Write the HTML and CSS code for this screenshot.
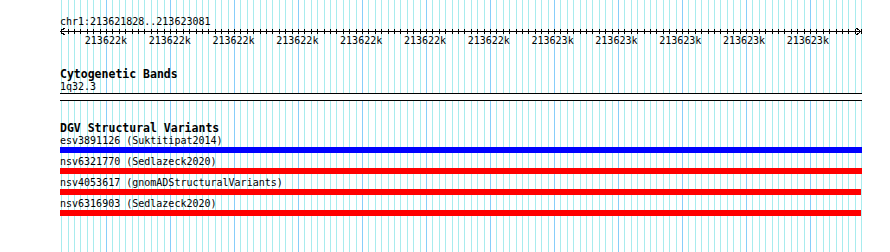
FILE: index.html
```html
<!DOCTYPE html>
<html>
<head>
<meta charset="utf-8">
<link rel="stylesheet" href="styles.css">
</head>
<body>
<div class="view">
  <svg class="grid" id="grid" width="802" height="252"></svg>
  <div class="ruler">
    <div class="loc">chr1:213621828..213623081</div>
    <svg class="scale" id="scale" width="802" height="6">
      <rect x="0" y="3" width="802" height="1" fill="#000"></rect>
      <polyline points="4.5,0 0.5,3.5 4.5,7" fill="none" stroke="#000" stroke-width="1"></polyline>
      <polyline points="796.5,0 800.5,3.5 796.5,7" fill="none" stroke="#000" stroke-width="1"></polyline>
    </svg>
    <div class="ticklabels">
      <span>213622k</span><span>213622k</span><span>213622k</span><span>213622k</span><span>213622k</span><span>213622k</span><span>213622k</span><span>213623k</span><span>213623k</span><span>213623k</span><span>213623k</span><span>213623k</span>
    </div>
  </div>
  <div class="track cyto">
    <div class="track-title">Cytogenetic Bands</div>
    <div class="band-label">1q32.3</div>
  </div>
  <div class="divider"></div>
  <div class="track dgv">
    <div class="track-title">DGV Structural Variants</div>
    <div class="feature">
      <div class="flabel">esv3891126 (Suktitipat2014)</div>
      <div class="bar blue"></div>
    </div>
    <div class="feature">
      <div class="flabel">nsv6321770 (Sedlazeck2020)</div>
      <div class="bar red"></div>
    </div>
    <div class="feature">
      <div class="flabel">nsv4053617 (gnomADStructuralVariants)</div>
      <div class="bar red short"></div>
    </div>
    <div class="feature">
      <div class="flabel">nsv6316903 (Sedlazeck2020)</div>
      <div class="bar red short"></div>
    </div>
  </div>
</div>
<script src="script.js"></script>
</body>
</html>
```

FILE: styles.css
```css
html, body {
  margin: 0;
  padding: 0;
  background: #fff;
}
body {
  width: 890px;
  height: 252px;
  overflow: hidden;
  font-family: "DejaVu Sans Mono", "Liberation Mono", monospace;
  font-size: 10px;
  color: #000;
}
.view {
  position: relative;
  margin-left: 60px;
  width: 802px;
  height: 252px;
}
.grid {
  position: absolute;
  top: 0;
  left: 0;
  z-index: 0;
  shape-rendering: crispEdges;
}
.ruler, .track, .divider {
  position: relative;
  z-index: 1;
}
.ruler {
  padding-top: 15px;
}
.loc {
  line-height: 13px;
  white-space: nowrap;
}
.scale {
  display: block;
  overflow: visible;
  shape-rendering: crispEdges;
}
.ticklabels {
  display: flex;
  padding-left: 14px;
  height: 13px;
  line-height: 13px;
}
.ticklabels span {
  flex: none;
  width: 63.82px;
  text-align: center;
}
.track-title {
  font-weight: bold;
  font-size: 11.5px;
  line-height: 12px;
  white-space: nowrap;
}
.cyto {
  margin-top: 21px;
}
.band-label {
  line-height: 13px;
}
.divider {
  height: 6px;
  background: #fff;
  border-top: 1px solid #000;
  border-bottom: 1px solid #000;
}
.dgv {
  margin-top: 21px;
}
.feature {
  margin-bottom: 2px;
}
.flabel {
  line-height: 13px;
  white-space: nowrap;
}
.bar {
  height: 6px;
  width: 802px;
}
.bar.short {
  width: 801px;
}
.blue {
  background: #0000ff;
}
.red {
  background: #ff0000;
}
```

FILE: script.js
```javascript
(function () {
  var NS = 'http://www.w3.org/2000/svg';
  var start = 213621828;
  var scale = 0.64;
  var grid = document.getElementById('grid');
  var ruler = document.getElementById('scale');
  for (var bp = 213621830; bp <= 213623080; bp += 10) {
    var x = Math.round((bp - start) * scale);
    var major = bp % 100 === 0;
    var g = document.createElementNS(NS, 'rect');
    g.setAttribute('x', x);
    g.setAttribute('y', 0);
    g.setAttribute('width', 1);
    g.setAttribute('height', 252);
    g.setAttribute('fill', major ? '#87cefa' : '#a8ecee');
    grid.appendChild(g);
    var t = document.createElementNS(NS, 'rect');
    t.setAttribute('x', x);
    t.setAttribute('y', 1);
    t.setAttribute('width', 1);
    t.setAttribute('height', 5);
    t.setAttribute('fill', '#000');
    ruler.appendChild(t);
  }
})();
```
